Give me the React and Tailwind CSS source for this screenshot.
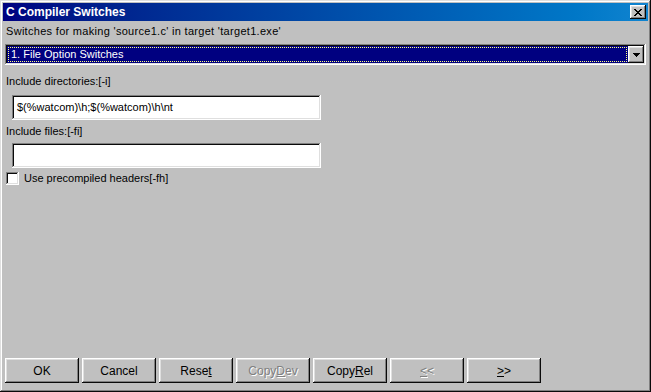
import React from "react";

const raised =
  "shadow-[inset_-1px_-1px_#0a0a0a,inset_1px_1px_#ffffff,inset_-2px_-2px_#808080,inset_2px_2px_#dfdfdf]";
const sunken =
  "shadow-[inset_-1px_-1px_#ffffff,inset_1px_1px_#808080,inset_-2px_-2px_#dfdfdf,inset_2px_2px_#0a0a0a]";

const Button = ({ children, disabled }) => (
  <div
    className={`w-[74px] h-[25px] flex items-center justify-center bg-[#c0c0c0] ${raised} ${
      disabled ? "text-[#808080] [text-shadow:1px_1px_0_#ffffff]" : "text-black"
    }`}
  >
    {children}
  </div>
);

const App = () => {
  return (
    <div
      className="w-[651px] h-[392px] bg-[#c0c0c0] p-[3px] flex flex-col text-[11px] text-black shadow-[inset_-1px_-1px_#0a0a0a,inset_1px_1px_#dfdfdf,inset_-2px_-2px_#808080,inset_2px_2px_#ffffff]"
      style={{ fontFamily: '"Liberation Sans", Arial, sans-serif' }}
    >
      {/* Title bar */}
      <div className="h-[18px] flex items-center justify-between bg-linear-to-r from-[#000080] to-[#1084d0] pl-[3px] pr-[2px]">
        <span className="text-white font-bold text-[12px] leading-none">C Compiler Switches</span>
        <div className={`w-[16px] h-[14px] bg-[#c0c0c0] flex items-center justify-center ${raised}`}>
          <svg width="8" height="7" viewBox="0 0 8 7" shapeRendering="crispEdges">
            <path d="M0 0h2v1H0zM6 0h2v1H6zM1 1h2v1H1zM5 1h2v1H5zM2 2h4v1H2zM3 3h2v1H3zM2 4h4v1H2zM1 5h2v1H1zM5 5h2v1H5zM0 6h2v1H0zM6 6h2v1H6z" fill="#000" />
          </svg>
        </div>
      </div>

      {/* Subtitle */}
      <div className="h-[21px] flex items-center pl-[3px] tracking-[0.3px]">
        Switches for making 'source1.c' in target 'target1.exe'
      </div>

      {/* Combo */}
      <div className={`mt-[2px] ml-[2px] w-[641px] h-[21px] bg-white p-[2px] flex ${sunken}`}>
        <div className="flex-1 bg-[#000080] p-[1px]">
          <div className="h-full border border-dotted border-[#ffff80] flex items-center pl-[2px] text-white">
            1. File Option Switches
          </div>
        </div>
        <div className={`w-[16px] h-[17px] bg-[#c0c0c0] flex items-center justify-center ${raised}`}>
          <svg width="7" height="4" viewBox="0 0 7 4" shapeRendering="crispEdges">
            <path d="M0 0h7v1H0zM1 1h5v1H1zM2 2h3v1H2zM3 3h1v1H3z" fill="#000" />
          </svg>
        </div>
      </div>

      {/* Include directories */}
      <div className="mt-[7px] h-[18px] flex items-center pl-[3px]">Include directories:[-i]</div>
      <div className={`mt-[5px] ml-[9px] w-[309px] h-[25px] bg-white flex items-center pl-[5px] ${sunken}`}>
        $(%watcom)\h;$(%watcom)\h\nt
      </div>

      {/* Include files */}
      <div className="mt-[2px] h-[18px] flex items-center pl-[3px]">Include files:[-fi]</div>
      <div className={`mt-[3px] ml-[9px] w-[309px] h-[25px] bg-white ${sunken}`} />

      {/* Checkbox */}
      <div className="mt-[4px] h-[13px] flex items-center pl-[3px] gap-[5px]">
        <div className={`w-[13px] h-[13px] bg-white ${sunken}`} />
        <span>Use precompiled headers[-fh]</span>
      </div>

      {/* Buttons */}
      <div className="mt-auto mb-[6px] ml-[2px] flex gap-[3px] text-[12px]">
        <Button>OK</Button>
        <Button>Cancel</Button>
        <Button>
          Rese<u>t</u>
        </Button>
        <Button disabled>
          Copy<u>D</u>ev
        </Button>
        <Button>
          Copy<u>R</u>el
        </Button>
        <Button disabled>
          <u>&lt;</u>&lt;
        </Button>
        <Button>
          <u>&gt;</u>&gt;
        </Button>
      </div>
    </div>
  );
};

export default App;
